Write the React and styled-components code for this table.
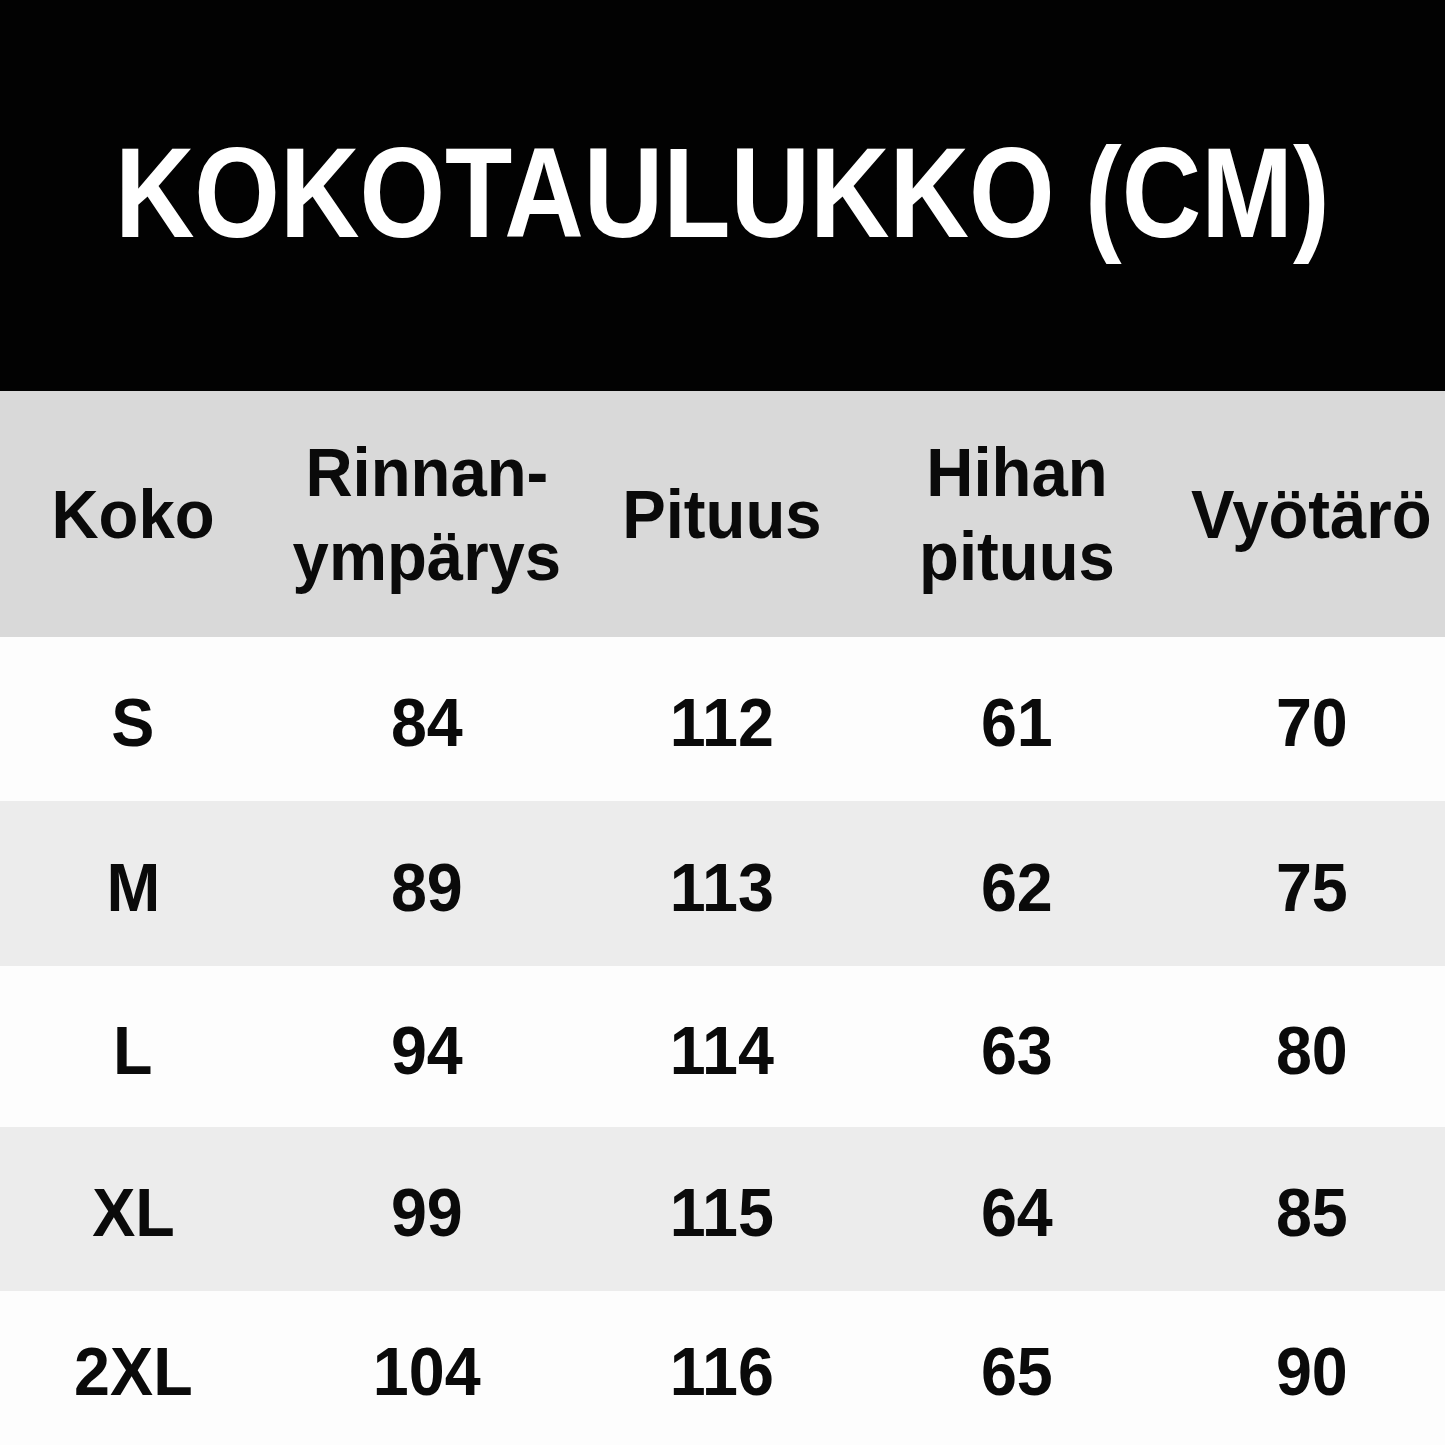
import React from 'react';
import styled, { createGlobalStyle } from 'styled-components';

const GlobalStyle = createGlobalStyle`
    html, body {
        margin: 0;
        padding: 0;
        background: #fdfdfd;
    }
    body {
        font-family: "Liberation Sans", Arial, sans-serif;
    }
`;

const Page = styled.div`
    width: 1445px;
    height: 1445px;
    display: flex;
    flex-direction: column;
    overflow: hidden;
    background: #fdfdfd;
`;

const Banner = styled.div`
    height: 391px;
    background: #020202;
    display: flex;
    justify-content: center;
    padding-top: 129px;
    box-sizing: border-box;
`;

const Title = styled.h1`
    margin: 0;
    color: #ffffff;
    font-size: 128px;
    font-weight: 700;
    line-height: 1;
    white-space: nowrap;
    transform: scaleX(0.86);
    transform-origin: center top;
`;

const Row = styled.div`
    display: grid;
    grid-template-columns: 266px 322px 268px 322px 267px;
    align-items: center;
    height: ${(p) => p.$height}px;
    background: ${(p) => p.$bg};
    flex: ${(p) => (p.$grow ? 1 : 'none')};
    box-sizing: border-box;
    padding-top: ${(p) => p.$offset || 0}px;
`;

const Cell = styled.div`
    display: flex;
    justify-content: center;
    text-align: center;
    color: #0a0a0a;
    font-size: 68px;
    font-weight: 700;
    line-height: ${(p) => p.$lh || 80}px;
`;

const CellText = styled.span`
    display: inline-block;
    white-space: nowrap;
    transform: scaleX(${(p) => p.$scale || 0.95});
`;

const headers = [
    ['Koko'],
    ['Rinnan-', 'ympärys'],
    ['Pituus'],
    ['Hihan', 'pituus'],
    ['Vyötärö'],
];

const rows = [
    ['S', '84', '112', '61', '70'],
    ['M', '89', '113', '62', '75'],
    ['L', '94', '114', '63', '80'],
    ['XL', '99', '115', '64', '85'],
    ['2XL', '104', '116', '65', '90'],
];

const rowHeights = [164, 165, 161, 164, 154];

const App = () => {
    return (
        <Page>
            <GlobalStyle />
            <Banner>
                <Title>KOKOTAULUKKO (CM)</Title>
            </Banner>
            <Row $height={246} $bg="#d9d9d9">
                {headers.map((lines, i) => (
                    <Cell key={i} $lh={84}>
                        <CellText $scale={0.96}>
                            {lines.map((l, j) => (
                                <React.Fragment key={j}>
                                    {j > 0 && <br />}
                                    {l}
                                </React.Fragment>
                            ))}
                        </CellText>
                    </Cell>
                ))}
            </Row>
            {rows.map((r, i) => (
                <Row
                    key={r[0]}
                    $height={rowHeights[i]}
                    $bg={i % 2 === 1 ? '#ececec' : '#fdfdfd'}
                    $offset={6}
                    $grow={i === rows.length - 1}
                >
                    {r.map((v, j) => (
                        <Cell key={j}>
                            <CellText>{v}</CellText>
                        </Cell>
                    ))}
                </Row>
            ))}
        </Page>
    );
};

export default App;
